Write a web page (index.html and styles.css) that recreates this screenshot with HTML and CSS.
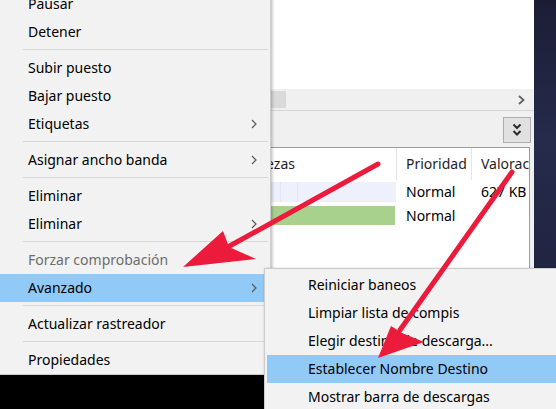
FILE: index.html
```html
<!DOCTYPE html>
<html lang="es">
<head>
  <meta charset="UTF-8">
  <title>Menú contextual</title>
  <link rel="stylesheet" href="styles.css">
</head>
<body>
  <div class="screen">
    <div class="window">
      <div class="list-top"></div>

      <div class="hscroll">
        <div class="thumb"></div>
        <svg class="scroll-arrow" width="7" height="10" viewBox="0 0 7 10">
          <path d="M1 1 L5.5 5 L1 9" fill="none" stroke="#606060" stroke-width="1.8"/>
        </svg>
      </div>

      <div class="toolbar">
        <button class="collapse">
          <svg width="10" height="14" viewBox="0 0 10 14">
            <path d="M1.5 1.5 L5 5 L8.5 1.5 M1.5 8 L5 11.5 L8.5 8" fill="none" stroke="#2b2b2b" stroke-width="2"/>
          </svg>
        </button>
      </div>

      <div class="table-wrap">
        <div class="grid header">
          <div class="cell"></div>
          <div class="cell sep">Piezas</div>
          <div class="cell sep">Prioridad</div>
          <div class="cell">Valorac</div>
        </div>
        <div class="grid row">
          <div class="cell"></div>
          <div class="cell"><div class="pieces lavender"></div></div>
          <div class="cell">Normal</div>
          <div class="cell">627 KB</div>
        </div>
        <div class="grid row">
          <div class="cell"></div>
          <div class="cell"><div class="pieces green"></div></div>
          <div class="cell">Normal</div>
          <div class="cell"></div>
        </div>
      </div>

      <div class="taskbar"></div>
    </div>
    <div class="desktop"></div>

    <!-- menu principal -->
    <div class="menu main-menu">
      <div class="item">Pausar</div>
      <div class="item">Detener</div>
      <div class="separator"></div>
      <div class="item">Subir puesto</div>
      <div class="item">Bajar puesto</div>
      <div class="item has-sub">Etiquetas
        <svg class="chev" width="6" height="10" viewBox="0 0 6 10"><path d="M1 1 L5 5 L1 9" fill="none" stroke="#555" stroke-width="1.2"/></svg>
      </div>
      <div class="separator"></div>
      <div class="item has-sub">Asignar ancho banda
        <svg class="chev" width="6" height="10" viewBox="0 0 6 10"><path d="M1 1 L5 5 L1 9" fill="none" stroke="#555" stroke-width="1.2"/></svg>
      </div>
      <div class="separator"></div>
      <div class="item">Eliminar</div>
      <div class="item has-sub">Eliminar
        <svg class="chev" width="6" height="10" viewBox="0 0 6 10"><path d="M1 1 L5 5 L1 9" fill="none" stroke="#555" stroke-width="1.2"/></svg>
      </div>
      <div class="separator"></div>
      <div class="item disabled">Forzar comprobación</div>
      <div class="item has-sub active">Avanzado
        <svg class="chev" width="6" height="10" viewBox="0 0 6 10"><path d="M1 1 L5 5 L1 9" fill="none" stroke="#555" stroke-width="1.2"/></svg>
      </div>
      <div class="separator"></div>
      <div class="item">Actualizar rastreador</div>
      <div class="separator"></div>
      <div class="item">Propiedades</div>
    </div>

    <!-- submenu Avanzado -->
    <div class="menu sub-menu">
      <div class="item">Reiniciar baneos</div>
      <div class="item">Limpiar lista de compis</div>
      <div class="item">Elegir destino de descarga...</div>
      <div class="item active">Establecer Nombre Destino</div>
      <div class="item">Mostrar barra de descargas</div>
    </div>

    <svg class="arrows" width="556" height="409" viewBox="0 0 556 409">
      <line x1="378" y1="164" x2="226" y2="248" stroke="#ec1a3b" stroke-width="5" stroke-linecap="round"/>
      <polygon points="183,267 223,231 229,247 256,259" fill="#ec1a3b"/>
      <line x1="512" y1="172" x2="400" y2="330" stroke="#ec1a3b" stroke-width="5" stroke-linecap="round"/>
      <polygon points="378,358 391,326 402,333 424,342" fill="#ec1a3b"/>
    </svg>
  </div>
</body>
</html>
```

FILE: styles.css
```css
body {
  margin: 0;
  font-family: "Noto Sans", "Open Sans", sans-serif;
  font-size: 14px;
  color: #000;
}
.screen {
  position: relative;
  width: 556px;
  height: 409px;
  overflow: hidden;
  display: flex;
}
.window {
  width: 534px;
  display: flex;
  flex-direction: column;
  background: #f0f0f0;
}
.list-top {
  height: 89px;
  background: #fff;
}
.hscroll {
  height: 21px;
  display: flex;
  align-items: center;
  background: #f0f0f0;
}
.thumb {
  width: 286px;
  height: 17px;
  background: #dadada;
}
.scroll-arrow {
  margin-left: auto;
  margin-right: 9px;
}
.toolbar {
  height: 36px;
  border-top: 1px solid #d6d6d6;
  display: flex;
  align-items: center;
  justify-content: flex-end;
  padding-right: 3px;
}
.collapse {
  width: 28px;
  height: 26px;
  margin-top: 2px;
  padding: 0;
  border: 1px solid #adadad;
  background: #e1e1e1;
  display: flex;
  align-items: center;
  justify-content: center;
}
.table-wrap {
  flex: 1;
  margin-right: 4px;
  background: #fff;
  border: 1px solid #9a9da3;
  border-left: none;
}
.grid {
  display: grid;
  grid-template-columns: 245px 152px 75px 1fr;
}
.header {
  height: 32px;
}
.header .cell {
  line-height: 32px;
  padding-left: 9px;
  white-space: nowrap;
  overflow: hidden;
  color: #1e1e1e;
}
.header .sep {
  border-right: 1px solid #e5e5e5;
}
.row {
  height: 24px;
}
.row .cell {
  line-height: 24px;
  padding-left: 9px;
  white-space: nowrap;
  overflow: hidden;
}
.row .cell:nth-child(2) {
  padding-left: 0;
}
.pieces {
  margin: 2px 1px 0 0;
  height: 20px;
}
.lavender {
  background: linear-gradient(to right, #eef0fb 35px, #e4e7f6 35px, #e4e7f6 36px, #eef0fb 36px, #eef0fb 52px, #e4e7f6 52px, #e4e7f6 53px, #eef0fb 53px);
}
.green {
  background: #a9d18e;
  margin-right: 2px;
  height: 19px;
}
.taskbar {
  height: 34px;
  background: #000;
}
.desktop {
  flex: 1;
  background: linear-gradient(180deg, #1c1d35 0%, #262b4c 35%, #20233f 70%, #17182b 100%);
}
.menu {
  position: absolute;
  background: #f2f2f2;
  border: 1px solid #cccccc;
  box-sizing: border-box;
  box-shadow: 1px 1px 3px rgba(0,0,0,0.3);
}
.main-menu {
  left: -3px;
  top: -13px;
  width: 274px;
  padding: 2px 2px 0 2px;
}
.sub-menu {
  left: 264px;
  top: 268px;
  width: 310px;
  height: 160px;
  padding: 2px 0 0 2px;
}
.item {
  height: 28px;
  line-height: 28px;
  padding-left: 28px;
  display: flex;
  align-items: center;
  white-space: nowrap;
}
.sub-menu .item {
  padding-left: 41px;
}
.item.active {
  background: #91c9f7;
}
.item.disabled {
  color: #6d6d6d;
}
.chev {
  margin-left: auto;
  margin-right: 11px;
}
.separator {
  height: 8px;
  position: relative;
}
.separator::after {
  content: "";
  position: absolute;
  left: 23px;
  right: 0;
  top: 3px;
  height: 1px;
  background: #d7d7d7;
}
.arrows {
  position: absolute;
  left: 0;
  top: 0;
  pointer-events: none;
}
```
